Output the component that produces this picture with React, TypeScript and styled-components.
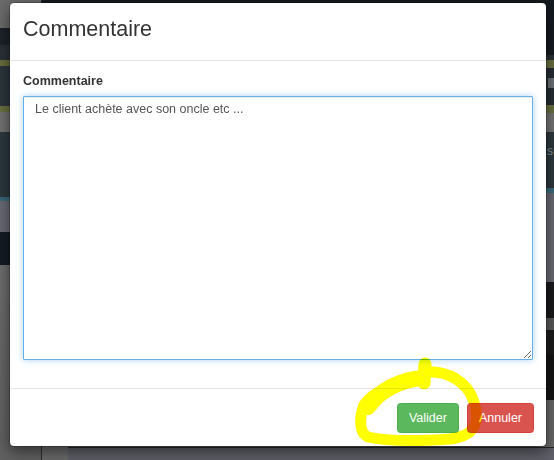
import React, { useEffect, useRef } from "react";
import styled, { createGlobalStyle } from "styled-components";

const GlobalStyle = createGlobalStyle`
  html, body {
    margin: 0;
    padding: 0;
    width: 554px;
    height: 460px;
    overflow: hidden;
    background: #6a6a6a;
    font-family: "Liberation Sans", Arial, sans-serif;
  }
  * { box-sizing: border-box; }
`;

/* ---------- dimmed page behind the dialog ---------- */

const Backdrop = styled.div`
  display: grid;
  grid-template-columns: 42px 1fr;
  width: 554px;
  height: 460px;
`;

const Column = styled.div<{ $divider?: boolean }>`
  display: flex;
  flex-direction: column;
  border-right: ${(p) => (p.$divider ? "1px solid #2b2b2e" : "none")};
`;

const Band = styled.div<{ $h: number; $bg: string }>`
  flex: 0 0 ${(p) => p.$h}px;
  background: ${(p) => p.$bg};
  position: relative;
`;

const FillBand = styled.div<{ $bg: string }>`
  flex: 1;
  background: ${(p) => p.$bg};
`;

const BottomStrip = styled.div`
  flex: 1;
  display: flex;
`;

const StripGray = styled.div`
  flex: 0 0 26px;
  background: #6b6b6b;
`;

const StripPanel = styled.div`
  flex: 1;
  background: #5f6069;
  border-top: 1px solid #24252a;
`;

const GhostText = styled.span`
  position: absolute;
  right: 1px;
  top: 12px;
  font-size: 12px;
  color: #8a9399;
`;

const GhostIcon = styled.span`
  position: absolute;
  right: 0;
  top: 10px;
  width: 6px;
  height: 10px;
  background: #7e858a;
  opacity: 0.8;
`;

/* ---------- dialog ---------- */

const Dialog = styled.div`
  position: fixed;
  left: 9px;
  top: 2px;
  width: 538px;
  height: 445px;
  display: flex;
  flex-direction: column;
  background: #fff;
  border: 1px solid rgba(0, 0, 0, 0.2);
  border-radius: 5px;
  box-shadow: 0 5px 15px rgba(0, 0, 0, 0.5);
  background-clip: padding-box;
`;

const Header = styled.div`
  padding: 14.5px 13px 18.5px;
  border-bottom: 1px solid #e5e5e5;
`;

const Title = styled.h4`
  margin: 0;
  font-size: 21.5px;
  line-height: 1.1;
  font-weight: 400;
  color: #333;
`;

const Body = styled.div`
  flex: 1;
  display: flex;
  flex-direction: column;
  padding: 12.5px 13px 28px;
`;

const Label = styled.label`
  display: block;
  font-size: 12.5px;
  line-height: 1.43;
  font-weight: 700;
  color: #333;
  margin-bottom: 5px;
`;

const TextArea = styled.textarea`
  flex: 1;
  width: 100%;
  margin: 0;
  padding: 4px 11px;
  font-family: "Liberation Sans", Arial, sans-serif;
  font-size: 12.5px;
  line-height: 1.43;
  color: #555;
  background: #fff;
  border: 1px solid #66afe9;
  border-radius: 1px;
  outline: 0;
  box-shadow: inset 0 1px 1px rgba(0, 0, 0, 0.075),
    0 0 7px rgba(102, 175, 233, 0.55);
`;

const Footer = styled.div`
  display: flex;
  justify-content: flex-end;
  gap: 8px;
  padding: 14px 12px 13px;
  border-top: 1px solid #e5e5e5;
`;

const Button = styled.button<{ $variant: "success" | "danger" }>`
  height: 30px;
  padding: 0 11px;
  font-family: "Liberation Sans", Arial, sans-serif;
  font-size: 12.5px;
  color: #fff;
  border-radius: 3.5px;
  cursor: pointer;
  background: ${(p) => (p.$variant === "success" ? "#5cb85c" : "#d9534f")};
  border: 1px solid
    ${(p) => (p.$variant === "success" ? "#4cae4c" : "#d43f3a")};
`;

/* ---------- yellow hand-drawn annotation ---------- */

const Annotation = styled.svg`
  position: fixed;
  left: 0;
  top: 0;
  pointer-events: none;
  mix-blend-mode: multiply;
`;

const leftBands: [number, string][] = [
  [28, "#6c6c6c"],
  [17, "#1c232a"],
  [15, "#2a3137"],
  [6, "#696f3f"],
  [40, "#2d373d"],
  [6, "#6b7242"],
  [20, "#737373"],
  [65, "#2c393f"],
  [4, "#386b7b"],
  [31, "#6b6b77"],
  [33, "#141c24"],
  [35, "#6e6e6e"],
];

const rightBands: [number, string, string?][] = [
  [55, "#141b21"],
  [5, "#2a3036"],
  [8, "#6a7040"],
  [37, "#262e34", "icon"],
  [8, "#6b7242"],
  [19, "#757575"],
  [56, "#2d383e", "text"],
  [5, "#3a6c7c"],
  [89, "#6b6b75"],
  [36, "#1a1a1c"],
  [12, "#5a5a5a"],
  [25, "#1c1c1c"],
  [45, "#161616"],
  [47, "#6a6a6a"],
];

export default function App() {
  const ref = useRef<HTMLTextAreaElement>(null);
  const text = "Le client achète avec son oncle etc ...";

  useEffect(() => {
    const el = ref.current;
    if (el) {
      el.focus();
      el.setSelectionRange(text.length, text.length);
    }
  }, []);

  return (
    <>
      <GlobalStyle />
      <Backdrop>
        <Column $divider>
          {leftBands.map(([h, bg], i) => (
            <Band key={i} $h={h} $bg={bg} />
          ))}
          <FillBand $bg="linear-gradient(#6c6c6c, #616161)" />
        </Column>
        <Column>
          {rightBands.map(([h, bg, extra], i) => (
            <Band key={i} $h={h} $bg={bg}>
              {extra === "text" && <GhostText>s</GhostText>}
              {extra === "icon" && <GhostIcon />}
            </Band>
          ))}
          <BottomStrip>
            <StripGray />
            <StripPanel />
          </BottomStrip>
        </Column>
      </Backdrop>

      <Dialog role="dialog">
        <Header>
          <Title>Commentaire</Title>
        </Header>
        <Body>
          <Label htmlFor="comment">Commentaire</Label>
          <TextArea id="comment" ref={ref} defaultValue={text} />
        </Body>
        <Footer>
          <Button $variant="success">Valider</Button>
          <Button $variant="danger">Annuler</Button>
        </Footer>
      </Dialog>

      <Annotation width={554} height={460} viewBox="0 0 554 460">
        <g
          fill="none"
          stroke="#ffff00"
          strokeLinecap="round"
          strokeLinejoin="round"
        >
          <path d="M425 364 L424 383" strokeWidth={13} />
          <path
            d="M424 372 C448 370, 468 382, 474 402 C480 422, 476 436, 450 439 C420 441, 385 441, 368 437 C359 433, 359 418, 364 405 C373 392, 395 382, 424 378"
            strokeWidth={11}
          />
          <path d="M422 378 C400 380, 380 390, 368 407" strokeWidth={16} />
        </g>
      </Annotation>
    </>
  );
}
